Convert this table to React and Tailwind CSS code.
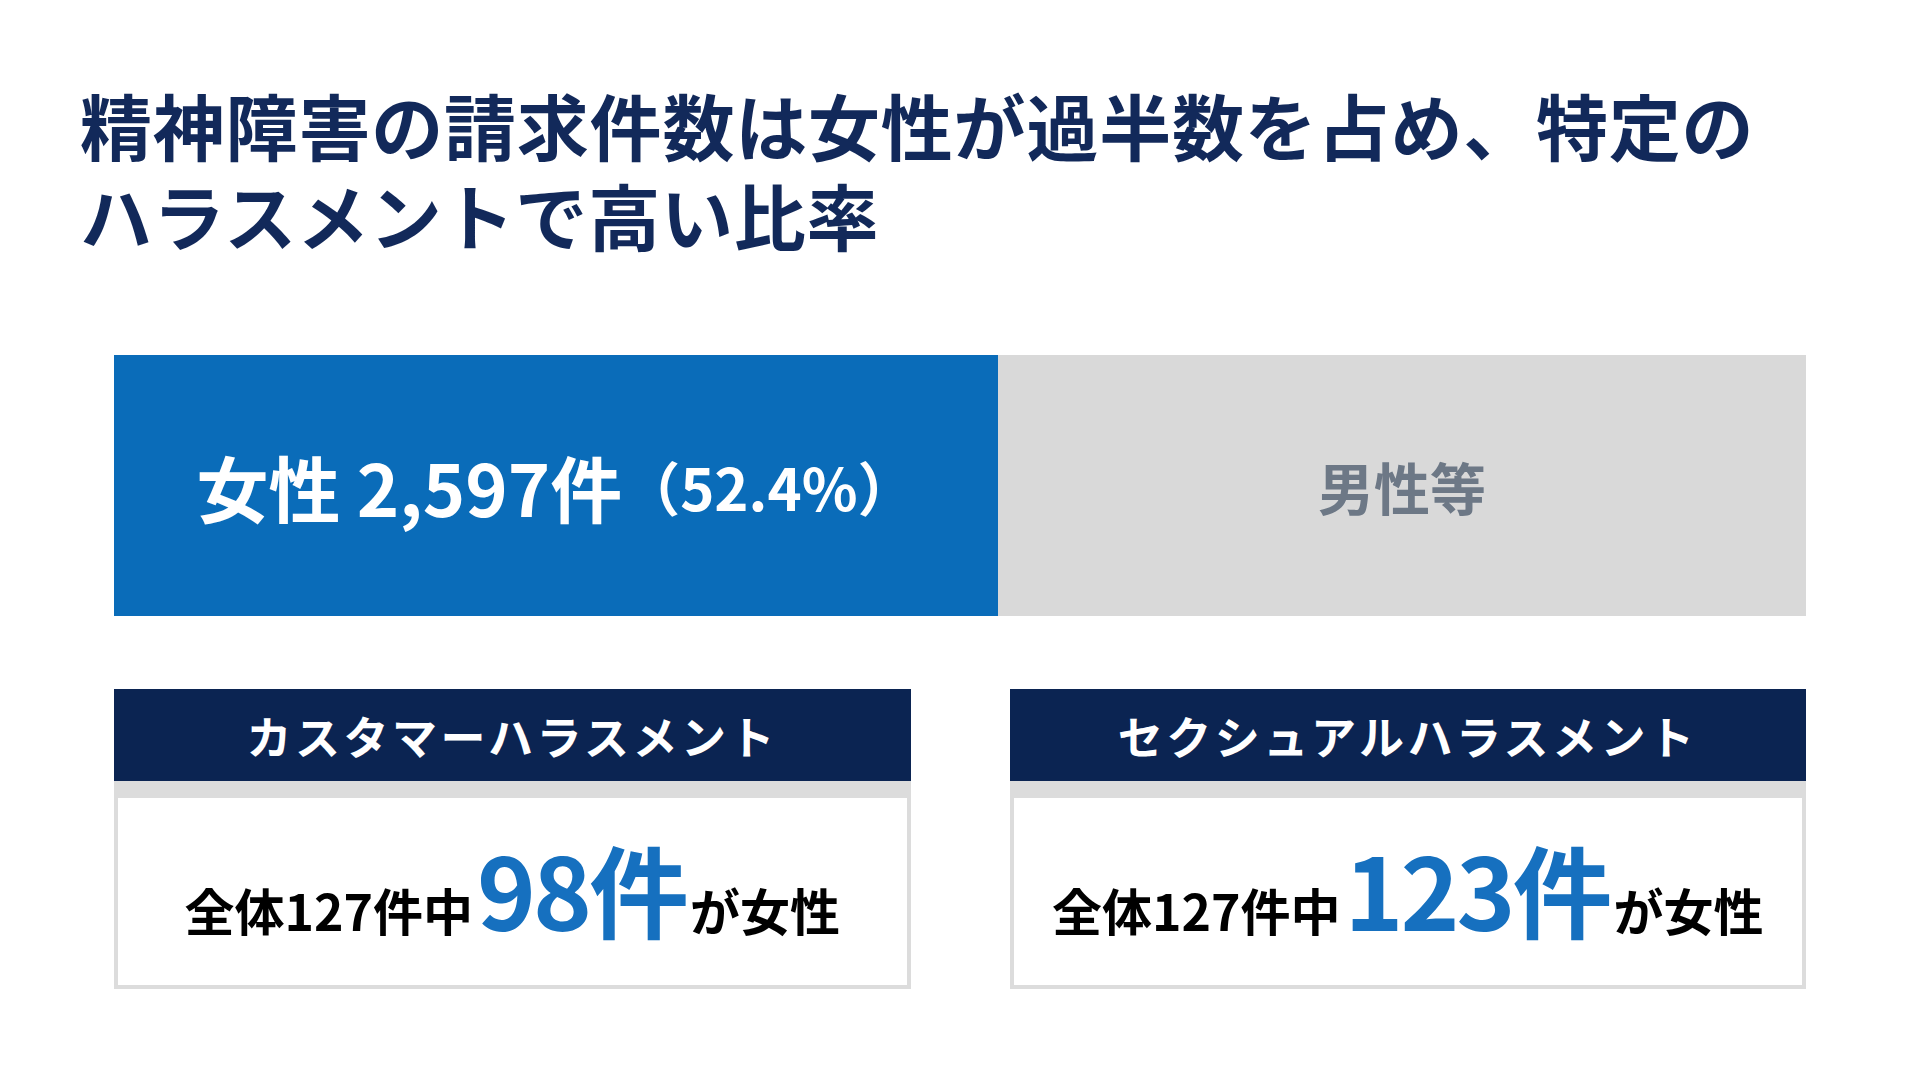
export default function App() {
  const jp = { fontFamily: '"Noto Sans CJK JP", "Noto Sans", sans-serif' };
  return (
    <div className="w-[1920px] h-[1080px] bg-white overflow-hidden" style={jp}>
      <div className="pt-[79px] pl-[80px]">
        <h1 className="text-[72px] leading-[90px] font-bold text-[#12295a] tracking-[0.8px]">
          精神障害の請求件数は女性が過半数を占め、特定の
          <br />
          ハラスメントで高い比率
        </h1>
      </div>
      <div className="px-[114px] mt-[96px]">
        <div className="flex h-[261px]">
          <div className="w-[884px] bg-[#0a6cb9] flex items-center justify-center text-white font-bold">
            <span className="text-[72px] leading-none">女性 2,597件</span>
            <span className="text-[58px] leading-none">（52.4%）</span>
          </div>
          <div className="flex-1 bg-[#d9d9d9] flex items-center justify-center">
            <span className="text-[56px] leading-none font-bold text-[#6d7886]">男性等</span>
          </div>
        </div>
        <div className="grid grid-cols-2 gap-[99px] mt-[73px]">
          <Card title="カスタマーハラスメント" num="98" />
          <Card title="セクシュアルハラスメント" num="123" />
        </div>
      </div>
    </div>
  );
}

function Card({ title, num }) {
  return (
    <div className="flex flex-col">
      <div className="h-[92px] bg-[#0b2452] flex items-center justify-center">
        <span className="text-[45px] font-bold text-white tracking-[3.5px] leading-none">{title}</span>
      </div>
      <div className="bg-[#dcdcdc] pt-[17px] px-[4px] pb-[4px]">
        <div className="bg-white h-[187px] flex items-center justify-center pb-[8px]">
          <div className="flex items-baseline font-bold text-black">
            <span className="text-[50px] leading-none">全体127件中</span>
            <span className="text-[100px] leading-none text-[#1670bf] tracking-[-3px] mx-[4px]">{num}件</span>
            <span className="text-[50px] leading-none">が女性</span>
          </div>
        </div>
      </div>
    </div>
  );
}
